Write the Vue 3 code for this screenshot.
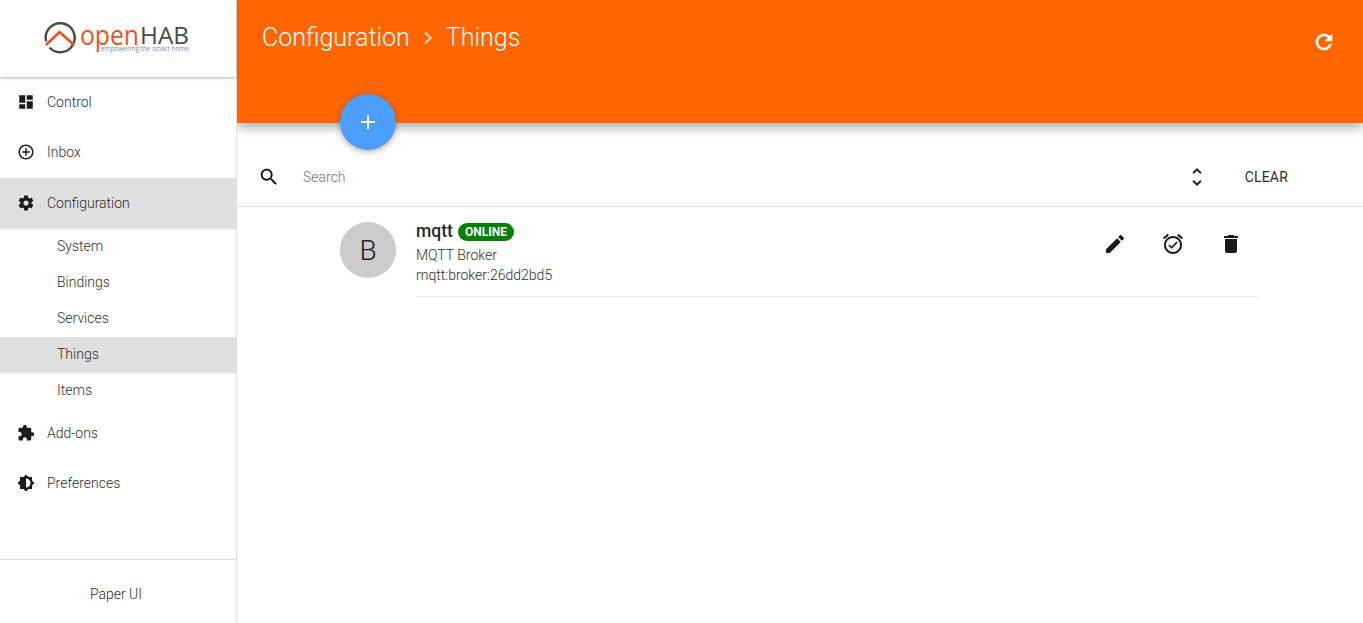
<template>
  <div class="app">
    <aside class="sidebar">
      <div class="brand">
        <svg class="logo" width="160" height="40" viewBox="0 0 160 40">
          <path d="M5.2 23.5 A14.5 14.5 0 1 1 8.5 29.5" fill="none" stroke="#4a4a4a" stroke-width="2.4" />
          <path d="M5 27 L18.5 14 L33 27" fill="none" stroke="#e8531f" stroke-width="2.6" />
          <text class="logo-open" x="39" y="27" textLength="59" lengthAdjust="spacingAndGlyphs">open</text>
          <text class="logo-hab" x="99" y="26" textLength="49" lengthAdjust="spacingAndGlyphs">HAB</text>
          <text class="logo-tag" x="60" y="32.5" textLength="88" lengthAdjust="spacingAndGlyphs">empowering the smart home</text>
        </svg>
      </div>
      <nav class="nav">
        <template v-for="item in navItems" :key="item.label">
          <a class="nav-item" :class="{ active: item.active }">
            <svg class="icon" viewBox="0 0 24 24"><path :d="item.icon" /></svg>
            <span>{{ item.label }}</span>
          </a>
          <div v-if="item.children" class="subnav">
            <a
              v-for="child in item.children"
              :key="child"
              class="sub-item"
              :class="{ active: child === 'Things' }"
            >{{ child }}</a>
          </div>
        </template>
      </nav>
      <div class="side-footer">Paper UI</div>
    </aside>

    <main class="main">
      <header class="topbar">
        <div class="crumbs">
          <span>Configuration</span>
          <svg class="chevron" viewBox="0 0 24 24"><path d="M10 6L8.59 7.41 13.17 12l-4.58 4.59L10 18l6-6z" /></svg>
          <span>Things</span>
        </div>
        <svg class="icon refresh" viewBox="0 0 24 24"><path :d="icons.refresh" /></svg>
        <button class="fab">
          <svg viewBox="0 0 24 24"><path d="M19 13h-6v6h-2v-6H5v-2h6V5h2v6h6v2z" /></svg>
        </button>
      </header>

      <div class="searchbar">
        <svg class="icon search-icon" viewBox="0 0 24 24"><path :d="icons.search" /></svg>
        <span class="search-text">Search</span>
        <svg class="icon unfold" viewBox="0 0 24 24"><path :d="icons.unfold" /></svg>
        <span class="clear">CLEAR</span>
      </div>

      <section class="thing">
        <div class="avatar">B</div>
        <div class="thing-body">
          <div class="thing-info">
            <div class="thing-title">
              <span class="thing-name">mqtt</span>
              <span class="badge">ONLINE</span>
            </div>
            <div class="thing-line">MQTT Broker</div>
            <div class="thing-line">mqtt:broker:26dd2bd5</div>
          </div>
          <div class="actions">
            <svg class="icon" viewBox="0 0 24 24"><path :d="icons.edit" /></svg>
            <svg class="icon" viewBox="0 0 24 24"><path :d="icons.alarm" /></svg>
            <svg class="icon" viewBox="0 0 24 24"><path :d="icons.trash" /></svg>
          </div>
        </div>
      </section>
    </main>
  </div>
</template>

<script setup>
const icons = {
  refresh: 'M17.65 6.35C16.2 4.9 14.21 4 12 4c-4.42 0-7.99 3.58-7.99 8s3.57 8 7.99 8c3.73 0 6.84-2.55 7.73-6h-2.08c-.82 2.33-3.04 4-5.65 4-3.31 0-6-2.69-6-6s2.69-6 6-6c1.66 0 3.14.69 4.22 1.78L13 11h7V4l-2.35 2.35z',
  search: 'M15.5 14h-.79l-.28-.27C15.41 12.59 16 11.11 16 9.5 16 5.91 13.09 3 9.5 3S3 5.91 3 9.5 5.91 16 9.5 16c1.61 0 3.09-.59 4.23-1.57l.27.28v.79l5 4.99L20.49 19l-4.99-5zm-6 0C7.01 14 5 11.99 5 9.5S7.01 5 9.5 5 14 7.01 14 9.5 11.99 14 9.5 14z',
  unfold: 'M12 5.83L15.17 9l1.41-1.41L12 3 7.41 7.59 8.83 9 12 5.83zm0 12.34L8.83 15l-1.41 1.41L12 21l4.59-4.59L15.17 15 12 18.17z',
  edit: 'M3 17.25V21h3.75L17.81 9.94l-3.75-3.75L3 17.25zM20.71 7.04c.39-.39.39-1.02 0-1.41l-2.34-2.34c-.39-.39-1.02-.39-1.41 0l-1.83 1.83 3.75 3.75 1.83-1.83z',
  alarm: 'M22 5.72l-4.6-3.86-1.29 1.53 4.6 3.86L22 5.72zM7.88 3.39L6.6 1.86 2 5.71l1.29 1.53 4.59-3.85zM12 4c-4.97 0-9 4.03-9 9s4.02 9 9 9c4.97 0 9-4.03 9-9s-4.03-9-9-9zm0 16c-3.87 0-7-3.13-7-7s3.13-7 7-7 7 3.13 7 7-3.13 7-7 7zm-1.46-5.47L8.41 12.4l-1.06 1.06 3.18 3.18 6-6-1.06-1.06-4.93 4.95z',
  trash: 'M6 19c0 1.1.9 2 2 2h8c1.1 0 2-.9 2-2V7H6v12zM19 4h-3.5l-1-1h-5l-1 1H5v2h14V4z',
}

const navItems = [
  { label: 'Control', icon: 'M3 13h8V3H3v10zm0 8h8v-6H3v6zm10 0h8V11h-8v10zm0-18v6h8V3h-8z' },
  { label: 'Inbox', icon: 'M13 7h-2v4H7v2h4v4h2v-4h4v-2h-4V7zm-1-5C6.48 2 2 6.48 2 12s4.48 10 10 10 10-4.48 10-10S17.52 2 12 2zm0 18c-4.41 0-8-3.59-8-8s3.59-8 8-8 8 3.59 8 8-3.59 8-8 8z' },
  {
    label: 'Configuration',
    active: true,
    icon: 'M19.43 12.98c.04-.32.07-.64.07-.98s-.03-.66-.07-.98l2.11-1.65c.19-.15.24-.42.12-.64l-2-3.46c-.12-.22-.39-.3-.61-.22l-2.49 1c-.52-.4-1.08-.73-1.69-.98l-.38-2.65C14.46 2.18 14.25 2 14 2h-4c-.25 0-.46.18-.49.42l-.38 2.65c-.61.25-1.17.59-1.69.98l-2.49-1c-.23-.09-.49 0-.61.22l-2 3.46c-.13.22-.07.49.12.64l2.11 1.65c-.04.32-.07.65-.07.98s.03.66.07.98l-2.11 1.65c-.19.15-.24.42-.12.64l2 3.46c.12.22.39.3.61.22l2.49-1c.52.4 1.08.73 1.69.98l.38 2.65c.03.24.24.42.49.42h4c.25 0 .46-.18.49-.42l.38-2.65c.61-.25 1.17-.59 1.69-.98l2.49 1c.23.09.49 0 .61-.22l2-3.46c.12-.22.07-.49-.12-.64l-2.11-1.65zM12 15.5c-1.93 0-3.5-1.57-3.5-3.5s1.57-3.5 3.5-3.5 3.5 1.57 3.5 3.5-1.57 3.5-3.5 3.5z',
    children: ['System', 'Bindings', 'Services', 'Things', 'Items'],
  },
  { label: 'Add-ons', icon: 'M20.5 11H19V7c0-1.1-.9-2-2-2h-4V3.5C13 2.12 11.88 1 10.5 1S8 2.12 8 3.5V5H4c-1.1 0-1.99.9-1.99 2v3.8H3.5c1.49 0 2.7 1.21 2.7 2.7s-1.21 2.7-2.7 2.7H2V20c0 1.1.9 2 2 2h3.8v-1.5c0-1.49 1.21-2.7 2.7-2.7 1.49 0 2.7 1.21 2.7 2.7V22H17c1.1 0 2-.9 2-2v-4h1.5c1.38 0 2.5-1.12 2.5-2.5S21.88 11 20.5 11z' },
  { label: 'Preferences', icon: 'M20 15.31L23.31 12 20 8.69V4h-4.69L12 .69 8.69 4H4v4.69L.69 12 4 15.31V20h4.69L12 23.31 15.31 20H20v-4.69zM12 18V6c3.31 0 6 2.69 6 6s-2.69 6-6 6z' },
]
</script>

<style>
html, body {
  margin: 0;
  overflow: hidden;
}
</style>

<style scoped>
.app {
  display: flex;
  height: 623px;
  font-family: Roboto, "Liberation Sans", sans-serif;
  font-size: 14px;
  font-weight: 300;
  color: rgba(0, 0, 0, 0.87);
  background: #fff;
}
.sidebar {
  width: 236px;
  flex: none;
  display: flex;
  flex-direction: column;
  border-right: 1px solid #e0e0e0;
  background: #fff;
  position: relative;
  z-index: 1;
}
.brand {
  height: 77px;
  flex: none;
  box-sizing: border-box;
  padding: 18px 0 0 41px;
  box-shadow: 0 1px 3px rgba(0, 0, 0, 0.3);
  position: relative;
}
.logo {
  display: block;
}
.logo-open {
  font-family: "Open Sans", sans-serif;
  font-size: 28px;
  font-weight: 400;
  fill: #e8531f;
}
.logo-hab {
  font-family: "Open Sans", sans-serif;
  font-size: 24px;
  font-weight: 400;
  fill: #4a4a4a;
}
.logo-tag {
  font-family: "Open Sans", sans-serif;
  font-size: 7px;
  font-weight: 400;
  fill: #8a8a8a;
}
.nav {
  flex: 1;
  display: flex;
  flex-direction: column;
}
.nav-item {
  height: 50.25px;
  flex: none;
  display: flex;
  align-items: center;
  gap: 12px;
  padding-left: 17px;
}
.nav-item.active {
  height: 51px;
}
.nav-item.active,
.sub-item.active {
  background: #e0e0e0;
}
.subnav {
  display: flex;
  flex-direction: column;
  margin-bottom: -1px;
}
.sub-item {
  height: 36px;
  line-height: 35px;
  padding-left: 57px;
}
.side-footer {
  height: 64px;
  flex: none;
  box-sizing: border-box;
  border-top: 1px solid #e0e0e0;
  display: flex;
  align-items: center;
  justify-content: center;
  padding: 5px 4px 0 0;
}
.icon {
  width: 18px;
  height: 18px;
  flex: none;
  fill: #1c1c1c;
}
.main {
  flex: 1;
  min-width: 0;
  display: flex;
  flex-direction: column;
}
.topbar {
  height: 123px;
  flex: none;
  display: flex;
  justify-content: space-between;
  align-items: flex-start;
  box-sizing: border-box;
  padding: 22px 27px 0 25px;
  background: #ff6600;
  color: #fff;
  box-shadow: 0 4px 10px rgba(0, 0, 0, 0.35);
  position: relative;
}
.crumbs {
  display: flex;
  align-items: center;
  font-size: 25px;
  line-height: 32px;
  font-weight: 300;
}
.chevron {
  width: 24px;
  height: 24px;
  margin: 0 6px 0 6px;
  fill: rgba(255, 255, 255, 0.8);
}
.refresh {
  width: 24px;
  height: 24px;
  margin-top: 8px;
  fill: #fff;
  stroke: #fff;
  stroke-width: 0.6;
}
.fab {
  position: absolute;
  left: 103px;
  top: 94px;
  width: 56px;
  height: 56px;
  padding: 16px;
  border: 0;
  border-radius: 50%;
  background: #4b9efc;
  box-shadow: 0 2px 6px rgba(0, 0, 0, 0.3);
}
.fab svg {
  display: block;
  width: 24px;
  height: 24px;
  fill: #fff;
}
.searchbar {
  height: 84px;
  flex: none;
  box-sizing: border-box;
  padding: 25px 0 0 21px;
  display: flex;
  align-items: center;
  border-bottom: 1px solid #e0e0e0;
}
.search-icon {
  width: 22px;
  height: 22px;
  fill: #111;
}
.search-text {
  margin-left: 23px;
  flex: 1;
  color: #757575;
}
.unfold {
  width: 24px;
  height: 24px;
  fill: #222;
}
.clear {
  margin: 0 75px 0 36px;
  font-weight: 400;
  font-size: 14px;
  letter-spacing: 0.2px;
}
.thing {
  display: flex;
  gap: 20px;
  padding: 15px 103px 0;
}
.avatar {
  width: 56px;
  height: 56px;
  flex: none;
  border-radius: 50%;
  background: #ccc;
  display: flex;
  align-items: center;
  justify-content: center;
  font-size: 28px;
  font-weight: 300;
  color: #222;
}
.thing-body {
  flex: 1;
  display: flex;
  justify-content: space-between;
  height: 74px;
  border-bottom: 1px solid #eee;
}
.thing-title {
  display: flex;
  align-items: center;
  gap: 4px;
  height: 20px;
  margin-bottom: 4px;
  margin-top: -1px;
}
.thing-name {
  width: 38px;
  font-size: 17.5px;
  font-weight: 500;
}
.badge {
  width: 56px;
  height: 18px;
  margin-top: 1px;
  border-radius: 9px;
  background: #008000;
  color: #fff;
  font-size: 12px;
  font-weight: 700;
  line-height: 18px;
  text-align: center;
}
.thing-line {
  line-height: 20px;
}
.actions {
  display: flex;
  gap: 34px;
  padding: 10px 17px 0 0;
}
.actions .icon {
  width: 24px;
  height: 24px;
  fill: #1a1a1a;
}
</style>
